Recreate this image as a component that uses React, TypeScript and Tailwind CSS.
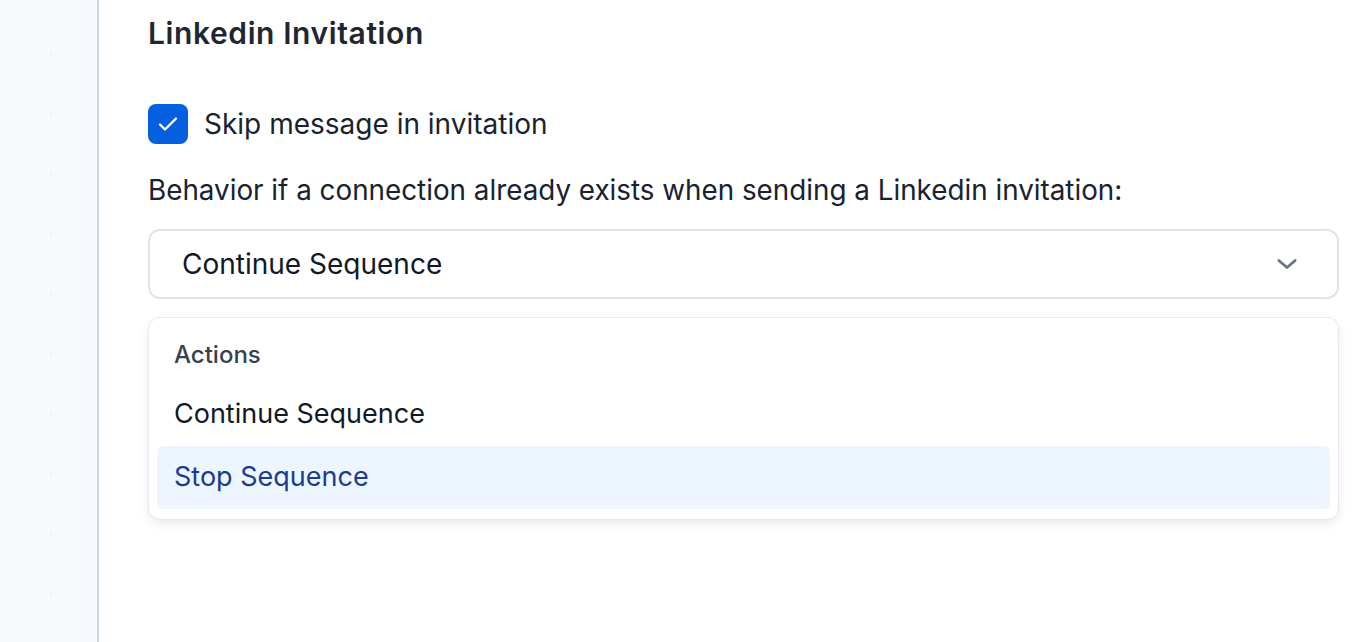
import React from "react";

export default function App() {
  const dots = Array.from({ length: 10 });
  return (
    <div
      className="flex h-[642px] w-full overflow-hidden bg-white text-[#111827]"
      style={{ fontFamily: "Inter, 'Noto Sans', sans-serif" }}
    >
      <div className="relative w-[99px] shrink-0 border-r-2 border-[#cbd5e1] bg-[#f7f9fb]">
        <div className="flex flex-col items-center gap-[58px] pl-[5px] pt-[53px]">
          {dots.map((_, i) => (
            <div key={i} className="h-[2px] w-[2px] rounded-full bg-[#e3e7ec]" />
          ))}
        </div>
      </div>
      <div className="flex-1 pl-[49px] pr-[33px] pt-[15px]">
        <h1 className="text-[30px] font-semibold leading-[36px] tracking-[0.6px] text-[#1f2733]">
          Linkedin Invitation
        </h1>
        <div className="mt-[53px] flex items-center gap-[16px]">
          <div className="flex h-[40px] w-[40px] items-center justify-center rounded-[8px] bg-[#0560e0]">
            <svg width="24" height="24" viewBox="0 0 24 24" fill="none" stroke="white" strokeWidth="2.3" strokeLinecap="round" strokeLinejoin="round">
              <path d="M4 12.5l5 5L20 6.5" />
            </svg>
          </div>
          <span className="text-[28px] leading-[40px] text-[#1a2230]">Skip message in invitation</span>
        </div>
        <p className="mt-[28px] text-[27.8px] leading-[36px] text-[#1a2230]">
          Behavior if a connection already exists when sending a Linkedin invitation:
        </p>
        <div className="mt-[21px] flex h-[70px] items-center justify-between rounded-[12px] border-2 border-[#dde4ec] pl-[32px] pr-[36px]">
          <span className="text-[28px] text-[#111827]">Continue Sequence</span>
          <svg width="28" height="28" viewBox="0 0 24 24" fill="none" stroke="#6b7280" strokeWidth="2.4" strokeLinecap="round" strokeLinejoin="round">
            <path d="M5 9l7 6 7-6" />
          </svg>
        </div>
        <div className="mt-[18px] rounded-[12px] border border-[#e8eaee] bg-white px-[8px] pb-[10px] pt-[21px] shadow-[0_4px_10px_rgba(0,0,0,0.08)]">
          <div className="px-[17px] text-[24px] font-medium leading-[32px] text-[#374151]">Actions</div>
          <div className="mt-[23px] px-[17px] text-[27px] leading-[40px] text-[#111827]">Continue Sequence</div>
          <div className="mt-[12px] flex h-[63px] items-center rounded-[6px] bg-[#edf5fe] px-[17px] text-[27px] text-[#1b3c8a]">
            Stop Sequence
          </div>
        </div>
      </div>
    </div>
  );
}
